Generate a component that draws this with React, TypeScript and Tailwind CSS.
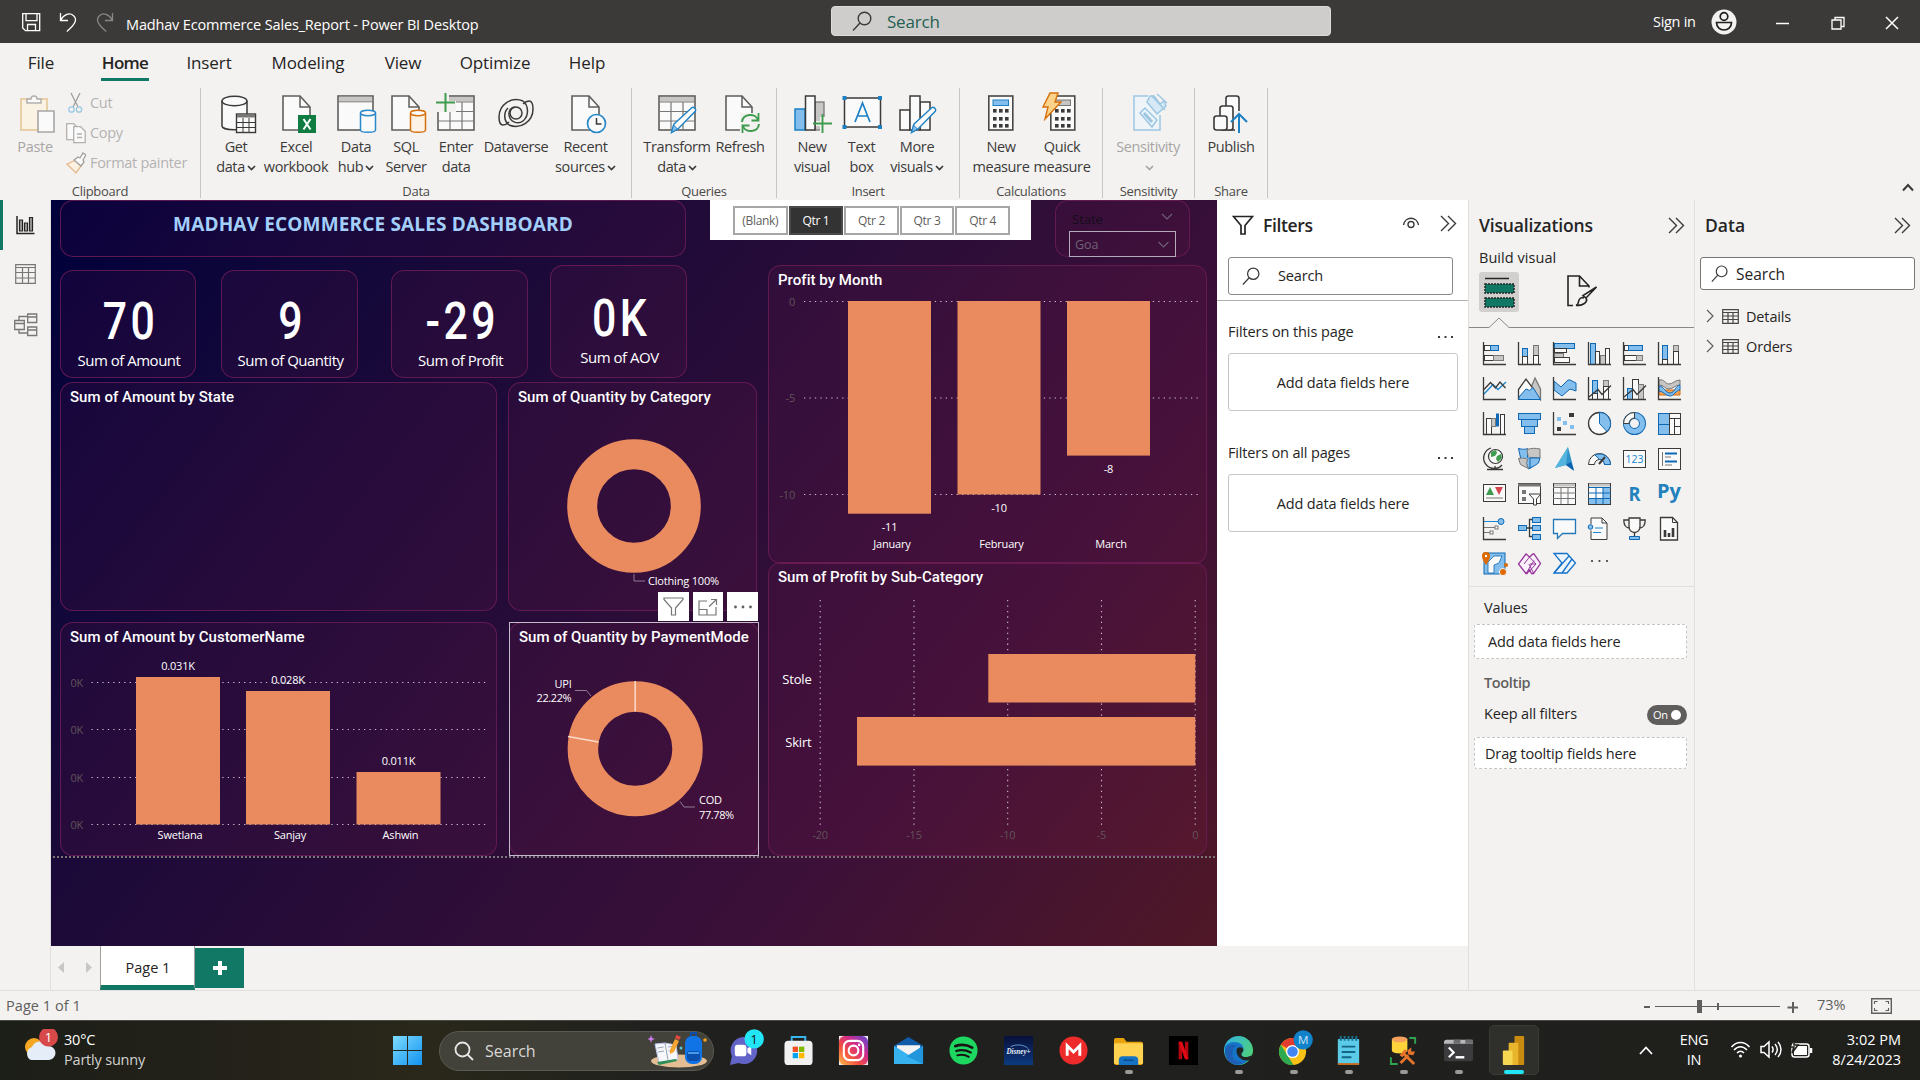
import React from "react";

type Kids = { children?: React.ReactNode };

const INK = "#3b3a39";
const BLUE = "#83beec";
const BSTR = "#0f68b4";
const GREY = "#c8c6c4";
const GSTR = "#797775";
const WHITE = "#fafafa";
const BAR = "#ea8b5f";

/* ---------- drawing helpers ---------- */

function B({ x, y, w, h, c = "w" }: { x: number; y: number; w: number; h: number; c?: "w" | "b" | "g" }) {
  const fill = c === "b" ? BLUE : c === "g" ? GREY : WHITE;
  const stroke = c === "b" ? BSTR : c === "g" ? GSTR : INK;
  return <rect x={x + 0.5} y={y + 0.5} width={w} height={h} fill={fill} stroke={stroke} />;
}

const Axes = () => <path d="M.5 0v22.5H23" fill="none" stroke={INK} strokeWidth="1.3" />;

function L({ d, c = INK, w = 1.3, f = "none" }: { d: string; c?: string; w?: number; f?: string }) {
  return <path d={d} fill={f} stroke={c} strokeWidth={w} />;
}

/* ---------- visual gallery ---------- */

const gallery: React.ReactNode[] = [
  <><B x={1} y={3} w={6} h={5} /><B x={7} y={3} w={8} h={5} c="b" /><B x={1} y={13} w={9} h={5} /><B x={10} y={13} w={10} h={5} c="g" /><Axes /></>,
  <><B x={4} y={6} w={5} h={8} c="b" /><B x={4} y={14} w={5} h={8} /><B x={15} y={3} w={5} h={10} c="g" /><B x={15} y={13} w={5} h={9} /><Axes /></>,
  <><B x={1} y={1} w={20} h={5} c="b" /><B x={1} y={6} w={12} h={4} /><B x={1} y={11} w={9} h={4} c="g" /><B x={1} y={15} w={15} h={5} /><Axes /></>,
  <><B x={2} y={1} w={5} h={21} c="b" /><B x={7} y={9} w={4} h={13} /><B x={12} y={13} w={5} h={9} c="g" /><B x={17} y={6} w={4} h={16} /><Axes /></>,
  <><B x={1} y={3} w={4} h={5} /><B x={5} y={3} w={14} h={5} c="b" /><B x={1} y={13} w={12} h={5} /><B x={13} y={13} w={6} h={5} c="g" /><Axes /></>,
  <><B x={4} y={3} w={5} h={14} c="b" /><B x={4} y={17} w={5} h={5} /><B x={15} y={3} w={5} h={6} c="g" /><B x={15} y={9} w={5} h={13} /><Axes /></>,
  <><L d="M1 17 10 7.500l5 5L23 5" c="#1a86d0" /><L d="M1 12.500 7.500 5.500l5 5.500L17 5l5.500 6" /><Axes /></>,
  <><L d="M12 13l5-12 5.500 11v11z" c={GSTR} f={GREY} /><L d="M.5 17.500v-5L8 2l7.500 10L.5 22z" f={WHITE} /><L d="M1 22.500h21.500L15 10.500l-3.500 3L8 12 1 20z" c={BSTR} f={BLUE} w={1} /></>,
  <><path d="M1 4l7 6 7-7h2l6 3v8l-6-2-8 7-8-6z" fill={BLUE} stroke={BSTR} /><Axes /></>,
  <><B x={4} y={3} w={5} h={14} c="b" /><B x={4} y={16} w={5} h={6} /><B x={15} y={3} w={5} h={6} c="g" /><B x={15} y={9} w={5} h={13} /><L d="M1 20l9-7.500 4 5L23 8.500" /><Axes /></>,
  <><B x={4} y={11} w={5} h={11} c="b" /><B x={9} y={2} w={6} h={20} /><B x={15} y={7} w={5} h={15} c="g" /><L d="M1 20l9-7.500 4 5L23 8.500" /><Axes /></>,
  <><path d="M1 3c6-1 6 4 10 4s6-4 11-4v5c-5 0-7 4-11 4S6 8 1 8z" fill={GREY} stroke={GSTR} /><path d="M1 13h21v5H1z" fill="#f2a45c" stroke="#d26b0b" /><path d="M1 9c5 0 6 7 11 7s6-8 10-8v5c-4 0-6 6-10 6S5 14 1 14z" fill={BLUE} stroke={BSTR} /><Axes /></>,
  <><B x={3} y={6} w={5} h={16} /><B x={8} y={6} w={4} h={8} c="g" /><path d="M13 1.500h3v13h-3z" fill="#0f68b4" /><B x={17} y={2} w={4} h={20} /><Axes /></>,
  <><B x={0} y={1} w={22} h={6} c="b" /><B x={3} y={7} w={16} h={7} c="b" /><B x={6} y={14} w={10} h={7} c="b" /></>,
  <><rect x="16" y="1" width="5" height="4" fill={INK} /><rect x="4" y="5" width="4" height="4" fill={BLUE} /><rect x="10" y="9" width="4" height="4" fill={BLUE} /><rect x="17" y="13" width="4" height="4" fill={BLUE} /><rect x="4" y="15" width="4" height="4" fill={INK} /><Axes /></>,
  <><circle cx="11.500" cy="11.500" r="11" fill={WHITE} stroke={INK} strokeWidth="1.300" /><path d="M11.500.5a11 11 0 0 1 7.500 19l-7.500-8z" fill={BLUE} stroke={BSTR} /></>,
  <><circle cx="11.500" cy="11.500" r="8" fill="none" stroke={BSTR} strokeWidth="7" /><circle cx="11.500" cy="11.500" r="8" fill="none" stroke={BLUE} strokeWidth="5.200" /><path d="M.5 11.500a11 11 0 0 1 11-11v5.500a5.500 5.500 0 0 0-5.500 5.500z" fill={WHITE} stroke={INK} /></>,
  <><B x={0} y={1} w={11} h={21} c="b" /><path d="M1 12.500h11" stroke={BSTR} /><B x={11} y={1} w={11} h={5} /><B x={11} y={6} w={5} h={16} /><B x={16} y={6} w={6} h={8} /><B x={16} y={14} w={6} h={8} /></>,
  <><circle cx="12.500" cy="9.500" r="7" fill={WHITE} stroke={INK} strokeWidth="1.200" /><path d="M8 5l5-2 1 3-2 3-4 1zM14 9l4-2 1 4-4 4-2-3z" fill="#3f9c4e" /><L d="M8 1a10.500 10.500 0 1 0 11 17M12 19v3M4 22.500h16" /></>,
  <><path d="M.5 1.500c5 1 6 1 9 0v9c3 1 4 1 4 10l-3 1.500-2-5-5-2z" fill={BLUE} stroke={BSTR} /><path d="M9 2.500c5-1.500 8-1.500 13-.5v9l-10-.5-2-2z" fill={GREY} stroke={GSTR} /><path d="M.5 11.500c4-1 8 0 9 1l-1 4 2 5-8-4z" fill={GREY} stroke={GSTR} /><path d="M12 11h10l-1.500 5-4.500 3-4 2z" fill={BLUE} stroke={BSTR} /></>,
  <><path d="M15 0l6 23-8-5-11 3z" fill="#2f93c9" /><path d="M15 0l-2 18-11 3z" fill="#55b4dd" /><path d="M13 18l8 6-3-9z" fill="#0b5fae" /></>,
  <><path d="M.5 17.500a11 11 0 0 1 22 0h-6a5 5 0 0 0-10 0z" fill={WHITE} stroke={INK} /><path d="M7 8a11 11 0 0 1 15.500 9.500h-6a5 5 0 0 0-5-5z" fill={BLUE} stroke={BSTR} /><L d="M11 17l6-7" w={2} /></>,
  <><B x={0} y={3} w={22} h={17} /><text x="11.500" y="15.500" textAnchor="middle" fontSize="10.500" fill="#1a86d0">123</text></>,
  <><B x={0} y={1} w={22} h={21} /><path d="M4.500 5v14" stroke={GSTR} /><path d="M7 6.500h12M7 14.500h12" stroke="#0f68b4" strokeWidth="2" /><path d="M7 10h6M7 18h7" stroke={GSTR} /></>,
  <><B x={0} y={2} w={22} h={17} /><path d="M3 13l4-8 4 8z" fill="#3f9c4e" /><path d="M12 5h8l-4 8z" fill="#d64550" /><path d="M3 16h17" stroke={GSTR} /></>,
  <><B x={0} y={1} w={22} h={20} /><path d="M0 3h23" stroke={GSTR} strokeWidth="3" /><rect x="4" y="8" width="4" height="4" fill={GSTR} /><rect x="4" y="15" width="4" height="4" fill={GSTR} /><path d="M11 12h12l-4.500 5v6h-3v-6z" fill={WHITE} stroke={INK} /></>,
  <><B x={0} y={1} w={22} h={21} /><path d="M1 3h21" stroke={GREY} strokeWidth="3" /><path d="M0 5.500h23M0 11h23M0 16.500h23M8 5v17M15 5v17" stroke={GSTR} /></>,
  <><B x={0} y={1} w={22} h={21} /><path d="M1 3h21" stroke={GREY} strokeWidth="3" /><path d="M15 5h7v17H1v-6h14z" fill={BLUE} /><path d="M0 5.500h23M0 11h23M0 16.500h23M8 5v17M15 5v17" stroke={BSTR} /></>,
  <><text x="11.500" y="18.500" textAnchor="middle" fontSize="20" fontWeight="700" fill="#2381bd" textLength="12" lengthAdjust="spacingAndGlyphs">R</text></>,
  <><text x="11" y="16" textAnchor="middle" fontSize="20" fontWeight="700" fill="#2381bd" textLength="24" lengthAdjust="spacingAndGlyphs">Py</text></>,
  <><path d="M1 4.500h16" stroke="#1a86d0" /><circle cx="18" cy="4.500" r="3" fill={BLUE} stroke={BSTR} /><path d="M1 10.500h11M1 15.500h6" stroke={GSTR} /><rect x="12" y="9" width="3" height="3" fill={WHITE} stroke={GSTR} /><rect x="7" y="14" width="3" height="3" fill={WHITE} stroke={GSTR} /><Axes /></>,
  <><B x={0} y={8} w={8} h={5} c="b" /><B x={14} y={0} w={8} h={5} c="b" /><B x={14} y={8} w={8} h={5} c="b" /><B x={14} y={17} w={8} h={5} c="b" /><L d="M9 11h5M14 2.500h-2.500v17H14" /></>,
  <><path d="M.5 2.500h22v14h-13l-5 5v-5h-4z" fill={WHITE} stroke="#2378b8" strokeWidth="1.300" /></>,
  <><path d="M3 7V1h11l5 5v16.500H3v-9" fill={WHITE} stroke={INK} /><path d="M14 1v5h5" fill="none" stroke={INK} /><circle cx="2.500" cy="10" r="2.300" fill={BLUE} stroke={BSTR} /><path d="M7 11h8M5 15.500h8" stroke="#1a86d0" /></>,
  <><path d="M6 1h11v9a5.500 5.500 0 0 1-11 0z" fill={WHITE} stroke={INK} strokeWidth="1.300" /><L d="M6 3H.8c0 5 2 8 6 8M17 3h5.200c0 5-2 8-6 8M11.500 16v3" /><path d="M6.500 19.500h10v3h-10z" fill={BLUE} stroke={BSTR} /></>,
  <><path d="M2.500.5h12l5 5v17.500h-17z" fill={WHITE} stroke={INK} strokeWidth="1.300" /><path d="M14.500.5v5h5" fill="none" stroke={INK} /><path d="M7 20v-7M11 20v-4M15 20v-9" stroke={INK} strokeWidth="2.600" /></>,
  <><rect x="1" y="1" width="21" height="21" fill={BLUE} stroke={BSTR} /><path d="M5 21V10l6-6h8l-3 7-5 2v8z" fill={WHITE} stroke={BSTR} strokeWidth=".8" /><path d="M-1 4a4 4 0 0 1 8 0c0 4-4 9-4 9s-4-5-4-9z" fill="#dc6a00" /><circle cx="3" cy="4" r="1.200" fill="#fff" /><circle cx="20" cy="20" r="3.600" fill="#dc6a00" stroke="#f3f2f1" /><circle cx="23" cy="13" r="2" fill="#dc6a00" /></>,
  <><path d="M8 2L11.500 5 15 2h1l6.500 9.500-7 10h-2L11.500 18 9 21.500H8L.5 12z" fill="#f8f0fa" stroke="#96329a" strokeWidth="1.300" /><path d="M11.500 5L18 12l-6.500 7M11.500 5L6 12M12 12l6 0M11 12l4.500 9M8 21.500l8-13" fill="none" stroke="#96329a" /></>,
  <><path d="M1 1.500h13l8.500 9.500-8.500 10H1L9 11z" fill="#eef6fd" stroke="#1473c9" strokeWidth="1.300" /><path d="M1 21L16 4M9 21L19 7" stroke="#1473c9" strokeWidth="1.300" /></>,
  <><circle cx="4" cy="9" r="1.100" fill={INK} /><circle cx="11.500" cy="9" r="1.100" fill={INK} /><circle cx="19" cy="9" r="1.100" fill={INK} /></>,
];

/* ---------- ribbon icons ---------- */

const Doc = ({ x = 5, w = 28 }: { x?: number; w?: number }) => (
  <>
    <path d={`M${x + 1} 3h${w - 11}l10 11v23h-${w - 1}z`} fill={WHITE} stroke="#605e5c" strokeWidth="1.600" />
    <path d={`M${x + w - 10} 3v11h10`} fill="none" stroke="#605e5c" strokeWidth="1.500" />
  </>
);

const Cyl = ({ c, f }: { c: string; f: string }) => (
  <>
    <path d="M24.500 20v17c0 3 15 3 15 0V20" fill={f} stroke={c} strokeWidth="1.500" />
    <ellipse cx="32" cy="20" rx="7.500" ry="2.700" fill={WHITE} stroke={c} strokeWidth="1.500" />
  </>
);

const Pencil = () => (
  <>
    <path d="M17 31L35 14.500c1.500-1 4.500 1.500 3.500 3.500L21 36l-6.500 3.500z" fill={WHITE} stroke="#1d80c3" strokeWidth="1.400" />
    <path d="M16.500 32l4 4-6 3.500z" fill={BLUE} stroke="#1d80c3" />
  </>
);

const Calc = ({ x = 5, grey = false }: { x?: number; grey?: boolean }) => (
  <g transform={`translate(${x} 0)`}>
    <rect x=".8" y="3" width="24" height="34" fill={WHITE} stroke="#4a4846" strokeWidth="1.600" />
    <rect x="5" y="7" width="15.500" height="5.500" fill={grey ? GREY : BLUE} stroke={grey ? GSTR : "#1d80c3"} />
    {[16, 24, 31].map((y) => [5, 11, 17].map((xx) => <rect key={`${xx}-${y}`} x={xx} y={y} width="3.600" height="3.600" fill={INK} />))}
  </g>
);

const Grid = () => (
  <>
    <rect x="2" y="3" width="36" height="34" fill={WHITE} stroke="#605e5c" strokeWidth="1.600" />
    <rect x="3" y="4" width="34" height="4.500" fill={GREY} />
    <path d="M2 9h36M2 18.500h36M2 28h36M14 9v28M26 9v28" stroke="#797775" strokeWidth="1.200" />
  </>
);

const ribbonIcons: Record<string, React.ReactNode> = {
  get: (
    <>
      <path d="M6 8v25c0 5 25 5 25 0V8" fill={WHITE} stroke={INK} strokeWidth="1.500" />
      <ellipse cx="18.500" cy="8" rx="12.500" ry="4.800" fill={WHITE} stroke={INK} strokeWidth="1.500" />
      <rect x="20.500" y="21" width="19" height="18.500" fill={WHITE} stroke={INK} strokeWidth="1.400" />
      <path d="M21 23h18" stroke={GSTR} strokeWidth="3" />
      <path d="M21 29.500h18M21 34.500h18M27 25v14M33 25v14" stroke={INK} />
    </>
  ),
  excel: (
    <>
      <Doc x={6} w={28} />
      <rect x="22" y="22" width="18" height="18" fill="#107c41" />
      <path d="M27.500 26l7 10.500M34.500 26l-7 10.500" stroke="#fff" strokeWidth="2" />
    </>
  ),
  hub: (
    <>
      <rect x="2" y="3" width="35" height="34" fill={WHITE} stroke="#605e5c" strokeWidth="1.600" />
      <path d="M3 6h33" stroke={GREY} strokeWidth="4.500" />
      <path d="M2 8.800h35" stroke="#797775" />
      <Cyl c="#2b88c8" f="#fafafa" />
    </>
  ),
  sql: (
    <>
      <Doc x={5} w={28} />
      <Cyl c="#d6700c" f="#fcf3e6" />
    </>
  ),
  enter: (
    <>
      <Grid />
      <path d="M-1 -1h14v20H-1zM13 8h7v11h-7z" fill="#f3f2f1" />
      <path d="M9.500 0v19M0 9.500h19" stroke="#3f9c4e" strokeWidth="2" />
    </>
  ),
  dataverse: (
    <g fill="none" stroke={INK} strokeWidth="1.500">
      <ellipse cx="20" cy="20" rx="6" ry="6" />
      <path d="M27 8C15 3 3 12 3 24c0 5 1 8 4 8 2 0 4-1 6-3" />
      <path d="M27 8c6 5 6 15 0 20-5 4-13 1-14-6-.5-4 2-8 6-8" />
      <path d="M13 32c12 5 24-4 24-16 0-5-1-8-4-8-2 0-4 1-6 3" />
      <path d="M13 32c-5-4-6-12-1-17" />
    </g>
  ),
  recent: (
    <>
      <Doc x={5} w={28} />
      <circle cx="30.500" cy="30.500" r="9" fill={WHITE} stroke="#2b88c8" strokeWidth="1.700" />
      <path d="M30.500 25v6h5" fill="none" stroke={INK} strokeWidth="1.500" />
    </>
  ),
  transform: (
    <>
      <Grid />
      <Pencil />
    </>
  ),
  refresh: (
    <>
      <Doc x={5} w={27} />
      <path d="M20 20h20v20H20z" fill="#f3f2f1" />
      <path d="M22 29c1-9 14-9 16-2M39 31c-1 9-14 9-16 2" fill="none" stroke="#3f9c4e" strokeWidth="2" />
      <path d="M38.500 20v7.500h-7M22.500 40v-7.500h7" fill="none" stroke="#3f9c4e" strokeWidth="1.800" />
    </>
  ),
  newvisual: (
    <>
      <rect x="3" y="16" width="10" height="21" fill={BLUE} stroke="#1d80c3" strokeWidth="1.500" />
      <rect x="23" y="9" width="9" height="28" fill={GREY} stroke={GSTR} strokeWidth="1.300" />
      <rect x="13.500" y="3" width="9.500" height="34" fill={WHITE} stroke={INK} strokeWidth="1.500" />
      <path d="M24 30.500h16M30.500 24v16" stroke="#f3f2f1" strokeWidth="5" />
      <path d="M21 30.500h19M30.500 21v19" stroke="#3f9c4e" strokeWidth="1.900" />
    </>
  ),
  textbox: (
    <>
      <rect x="2.500" y="5" width="36" height="29" fill={WHITE} stroke={INK} strokeWidth="1.500" />
      {[[0.5, 3], [36, 3], [0.5, 32], [36, 32]].map(([x, y]) => <rect key={`${x}${y}`} x={x} y={y} width="4" height="4" fill="#1d80c3" />)}
      <path d="M13 29L20.500 10 28 29M15.500 23h10" fill="none" stroke="#1d80c3" strokeWidth="1.700" />
    </>
  ),
  more: (
    <>
      <rect x="3" y="17" width="10" height="20" fill={WHITE} stroke={INK} strokeWidth="1.500" />
      <rect x="23" y="9" width="10" height="28" fill={WHITE} stroke={INK} strokeWidth="1.500" />
      <rect x="13" y="3" width="10" height="34" fill={WHITE} stroke={INK} strokeWidth="1.500" />
      <Pencil />
    </>
  ),
  calc: <Calc x={7} />,
  quick: (
    <>
      <Calc x={8} grey />
      <path d="M8 0h8l-3 9h6L3 26l3-12H1z" fill="#fbd38a" stroke="#d6700c" strokeWidth="1.400" />
    </>
  ),
  sensitivity: (
    <g stroke="#9cc7e2" strokeWidth="1.500">
      <path d="M20 3H6v34h26V22" fill="#eef4f8" />
      <path d="M12 20l5-5 12 12-5 7z" fill="#e9f3fa" />
      <path d="M16 20l8 9" strokeWidth="3" />
      <path d="M19 9l10 12 9-8-2-5-4 3-6-8-4 0z" fill="#d6e9f5" />
      <path d="M24 3l13 14M29 1l10 9" />
    </g>
  ),
  publish: (
    <g fill={WHITE} stroke={INK} strokeWidth="1.600">
      <rect x="15" y="3" width="13" height="34" rx="2.500" />
      <rect x="9" y="13" width="13" height="24" rx="2.500" />
      <rect x="3" y="23" width="13" height="14" rx="2.500" />
      <path d="M24 18h16v22H24z" fill="#f3f2f1" stroke="none" />
      <path d="M28 40V22M20 29l8-8 8 8" fill="none" stroke="#1d80c3" strokeWidth="2" />
    </g>
  ),
};

const Chevron = ({ c = INK }: { c?: string }) => (
  <svg width="9" height="6" viewBox="0 0 9 6" className="ml-0.5 inline-block"><path d="M1 1l3.500 3.500L8 1" fill="none" stroke={c} strokeWidth="1.700" /></svg>
);

function RibbonButton({ icon, a, b, w, caret, dim }: { icon: string; a: string; b?: string; w: string; caret?: boolean; dim?: boolean }) {
  return (
    <div className={`${w} flex shrink-0 flex-col items-center text-[14.5px] tracking-[-0.38px] ${dim ? "text-[#a8a6a4]" : "text-[#3b3a39]"}`}>
      <svg width="40" height="40" viewBox="0 0 40 40" className="shrink-0 overflow-visible">{ribbonIcons[icon]}</svg>
      <div className="mt-1 h-5 leading-5 whitespace-nowrap">{a}</div>
      <div className="h-5 leading-5 whitespace-nowrap">{b}{caret && <Chevron c={dim ? "#a8a6a4" : INK} />}</div>
    </div>
  );
}

function Group({ label, w, pad, children }: Kids & { label: string; w: string; pad: string }) {
  return (
    <div className={`${w} flex h-[110px] shrink-0 flex-col justify-between border-r border-[#c8c6c4]`}>
      <div className={`flex ${pad} pt-[5px]`}>{children}</div>
      <div className="h-[15px] text-center text-[13px] leading-[16px] tracking-[-0.3px] text-[#4c4a48]">{label}</div>
    </div>
  );
}

/* ---------- title bar, tabs, ribbon ---------- */

const Magnifier = ({ s = 20, c = INK }: { s?: number; c?: string }) => (
  <svg width={s} height={s} viewBox="0 0 20 20" fill="none" stroke={c} strokeWidth="1.400"><circle cx="12.500" cy="7.500" r="6.300" /><path d="M8 12L1 19.500" /></svg>
);

function TitleBar() {
  return (
    <header className="flex h-[43px] items-center bg-[#3b3a38] text-white">
      <svg width="100" height="24" viewBox="0 0 100 24" className="ml-[20px] shrink-0" fill="none" stroke="#fff" strokeWidth="1.300">
        <path d="M2.700 3.700h17v17H5.500l-2.800-2.800zM6 3.700v7h11v-7M7.500 20.500v-6h8v6" />
        <path d="M40.500 3v7.500H48M40.800 10c3-6 9-7.500 12.500-4.500 4 3.500 3 8-6.500 16" />
        <path d="M92.500 3v7.500H85M92.200 10c-3-6-9-7.500-12.500-4.500-4 3.500-3 8 6.500 16" stroke="#8a8886" />
      </svg>
      <div className="ml-[6px] w-[705px] shrink-0 pt-1.5 text-[14.5px] tracking-[-0.16px]">Madhav Ecommerce Sales_Report - Power BI Desktop</div>
      <div className="-mt-px flex h-[30px] w-[500px] shrink-0 items-center rounded-sm border border-[#dddbd9] bg-[#cfcdcb] pl-5 text-[17px] tracking-[-0.2px] text-[#245f53]">
        <Magnifier s={20} /><span className="ml-[15px] pt-0.5">Search</span>
      </div>
      <div className="ml-[322px] w-[46px] shrink-0 text-[14.5px] tracking-[-0.3px] whitespace-nowrap">Sign in</div>
      <svg width="26" height="26" viewBox="0 0 26 26" className="ml-[12px] shrink-0"><circle cx="13" cy="13" r="12.500" fill="#f3f2f1" /><g fill="none" stroke="#201f1e" strokeWidth="1.700"><circle cx="13" cy="7.500" r="3.800" /><path d="M5.500 13.500h15c0 10-15 10-15 0z" /></g></svg>
      <svg width="130" height="16" viewBox="0 0 130 16" className="mt-0.5 ml-[37px] shrink-0" fill="none" stroke="#fff" strokeWidth="1.500"><path d="M2 8.500h13" /><path d="M58 5h9v9h-9zM61 5V2.500h9v9h-3" strokeWidth="1.300" /><path d="M112 2l12 12M124 2l-12 12" /></svg>
    </header>
  );
}

function Tabs() {
  const tabs: [string, string][] = [["File", "w-[60px] ml-[11px]"], ["Home", "w-[48px] ml-[30px]"], ["Insert", "w-[60px] ml-[30px]"], ["Modeling", "w-[80px] ml-[29px]"], ["View", "w-[60px] ml-[25px]"], ["Optimize", "w-[80px] ml-[22px]"], ["Help", "w-[60px] ml-[22px]"]];
  return (
    <nav className="flex h-[45px] items-start pt-[3px] text-[17px] tracking-[-0.1px] text-[#252423]">
      {tabs.map(([t, c]) => (
        <div key={t} className={`${c} flex h-[35px] shrink-0 items-center justify-center ${t === "Home" ? "border-b-[3px] border-[#117865] pt-px font-semibold tracking-[-0.7px]" : "pb-[2px]"}`}>{t}</div>
      ))}
    </nav>
  );
}

function Ribbon() {
  return (
    <section className="flex h-[112px]">
      <Group label="Clipboard" w="w-[201px]" pad="pl-[11px]">
        <div className="flex w-[48px] flex-col items-center text-[14.5px] tracking-[-0.3px] text-[#a8a6a4]">
          <svg width="40" height="40" viewBox="0 0 40 40">
            <path d="M6 6h26v31H6z" fill="#faf3e4" stroke="#e9cfa6" strokeWidth="2" />
            <path d="M12 10V6h4c0-4 6-4 6 0h4v4z" fill={WHITE} stroke="#b3b0ad" strokeWidth="1.500" />
            <path d="M23 18h16v21H23z" fill={WHITE} stroke="#a8a6a4" strokeWidth="1.600" />
          </svg>
          <div className="mt-1 leading-5">Paste</div>
        </div>
        <div className="ml-[7px] flex flex-col text-[14.5px] tracking-[-0.3px] text-[#b5b3b1]">
          <div className="-mt-[5px] flex h-[30px] items-center">
            <svg width="20" height="22" viewBox="0 0 20 22" fill="none" strokeWidth="1.300"><path d="M5 1l7 14M14 1L7 15" stroke="#a19f9d" /><circle cx="5.500" cy="17.500" r="2.700" stroke="#9cc7e2" /><circle cx="13" cy="17.500" r="2.700" stroke="#9cc7e2" /></svg>
            <span className="ml-1">Cut</span>
          </div>
          <div className="flex h-[30px] items-center">
            <svg width="20" height="22" viewBox="0 0 20 22" fill={WHITE} stroke="#b3b0ad" strokeWidth="1.300"><path d="M.7 1.700h7l3 3v13H.7z" /><path d="M7.700 4.700h7l4.500 4.500v11.500H7.700z" /><path d="M11 12h5M11 15.500h5" /></svg>
            <span className="ml-1">Copy</span>
          </div>
          <div className="flex h-[30px] items-center">
            <svg width="20" height="22" viewBox="0 0 20 22" fill="none" strokeWidth="1.300"><path d="M1 12l9-4 5 6-5 7z" stroke="#e6b98a" fill="#fbf0e2" /><path d="M8 8l4-3 2 1 3-5 3 2-3 5 1 2-3 4z" stroke="#a19f9d" fill={WHITE} /></svg>
            <span className="ml-1">Format painter</span>
          </div>
        </div>
      </Group>
      <Group label="Data" w="w-[431px]" pad="pl-[3px]">
        <RibbonButton icon="get" a="Get" b="data" w="w-[64px]" caret />
        <RibbonButton icon="excel" a="Excel" b="workbook" w="w-[56px]" />
        <RibbonButton icon="hub" a="Data" b="hub" w="w-[64px]" caret />
        <RibbonButton icon="sql" a="SQL" b="Server" w="w-[36px]" />
        <RibbonButton icon="enter" a="Enter" b="data" w="w-[64px]" />
        <RibbonButton icon="dataverse" a="Dataverse" w="w-[56px]" />
        <RibbonButton icon="recent" a="Recent" b="sources" w="w-[83px]" caret />
      </Group>
      <Group label="Queries" w="w-[145px]" pad="pl-[9px]">
        <RibbonButton icon="transform" a="Transform" b="data" w="w-[72px]" caret />
        <RibbonButton icon="refresh" a="Refresh" w="w-[54px]" />
      </Group>
      <Group label="Insert" w="w-[183px]" pad="pl-[8px]">
        <RibbonButton icon="newvisual" a="New" b="visual" w="w-[54px]" />
        <RibbonButton icon="textbox" a="Text" b="box" w="w-[45px]" />
        <RibbonButton icon="more" a="More" b="visuals" w="w-[66px]" caret />
      </Group>
      <Group label="Calculations" w="w-[143px]" pad="pl-[11px]">
        <RibbonButton icon="calc" a="New" b="measure" w="w-[60px]" />
        <RibbonButton icon="quick" a="Quick" b="measure" w="w-[62px]" />
      </Group>
      <Group label="Sensitivity" w="w-[92px]" pad="pl-[2px]">
        <RibbonButton icon="sensitivity" a="Sensitivity" w="w-[86px]" caret dim />
      </Group>
      <Group label="Share" w="w-[73px]" pad="pl-0">
        <RibbonButton icon="publish" a="Publish" w="w-[72px]" />
      </Group>
      <div className="flex flex-1 items-end justify-end pr-1.5 pb-[7px]">
        <svg width="12" height="9" viewBox="0 0 12 9" className="-translate-y-px"><path d="M1 7.500l5-5.500 5 5.500" fill="none" stroke={INK} strokeWidth="2" /></svg>
      </div>
    </section>
  );
}

/* ---------- left rail ---------- */

function Rail() {
  return (
    <aside className="flex w-[51px] shrink-0 flex-col border-r border-[#e1dfdd]">
      <div className="flex h-[50px] items-center border-l-[3px] border-[#117865] pl-[13px]">
        <svg width="19" height="19" viewBox="0 0 19 19" fill="#a19f9d" stroke="#252423" strokeWidth="1.200"><path d="M1 0v17.500h17.500" fill="none" strokeWidth="1.500" /><path d="M3.500 4h3v11h-3zM8.500 7h3v8h-3zM13.500 1.500h3V15h-3z" /></svg>
      </div>
      <div className="flex h-[48px] items-center pl-[15px]">
        <svg width="21" height="20" viewBox="0 0 21 20" fill="none" stroke="#797775" strokeWidth="1.200"><path d="M.7.7h19.600v18.600H.7zM.7 3.500h19.600M.7 8.500h19.600M.7 14h19.600M7.500 3.500v16M13.500 3.500v16" /></svg>
      </div>
      <div className="flex h-[53px] items-center pl-[14px]">
        <svg width="24" height="24" viewBox="0 0 24 24" fill="#f3f2f1" stroke="#797775" strokeWidth="1.300"><path d="M5 7V3.500h8M5 16v4h8" fill="none" /><path d="M.7 7.500h9.600v9H.7zM13.700 1h9v8.500h-9zM13.700 14h9v8.500h-9zM.7 10.500h9.600M13.700 4h9M13.700 17h9" /></svg>
      </div>
    </aside>
  );
}

/* ---------- report visuals ---------- */

function Panel({ cls, title, vb, children }: Kids & { cls: string; title: string; vb?: string }) {
  return (
    <section className={`${cls} grid shrink-0 rounded-[13px] border border-[#6b1c55]/85 bg-[#d82a6a]/[0.07]`}>
      <h2 className="z-10 pt-[5px] pl-[9px] font-['Roboto'] text-[15px] leading-[18px] font-medium tracking-[0.04px] text-white [grid-area:1/1]">{title}</h2>
      {vb && <svg viewBox={vb} className="-m-px h-[calc(100%+2px)] w-[calc(100%+2px)] [grid-area:1/1]" fontSize="11" letterSpacing="-0.2">{children}</svg>}
    </section>
  );
}

function Kpi({ cls, value, label, pt = "pt-[24px]" }: { cls: string; value: string; label: string; pt?: string }) {
  return (
    <section className={`${cls} ${pt} flex shrink-0 flex-col items-center rounded-[13px] border border-[#6b1c55]/85 bg-[#d82a6a]/[0.07] text-white`}>
      <div className="scale-x-[0.84] pl-[6px] font-['Roboto'] text-[51px] leading-[54px] font-medium tracking-[4px] whitespace-nowrap">{value}</div>
      <div className="pl-[2px] text-[15px] leading-[22px] tracking-[-0.5px] whitespace-nowrap">{label}</div>
    </section>
  );
}

const Dots = ({ d }: { d: string }) => <path d={d} fill="none" stroke="#cdbfd0" strokeWidth="1.100" strokeDasharray="1.300 4.150" />;

function Report() {
  const grey = "#605458";
  return (
    <main className="h-[746px] w-[1166px] shrink-0 overflow-hidden bg-[linear-gradient(128deg,#00003a_0%,#10073a_17%,#260c38_45%,#3c1038_74%,#501827_100%)]">
      <div className="flex h-[57px] pl-[9px]">
        <div className="flex w-[626px] shrink-0 justify-center rounded-[13px] border border-[#6b1c55]/85 bg-[#d82a6a]/[0.05] pt-[11px]">
          <h1 className="text-[19px] leading-6 font-bold tracking-[0.16px] whitespace-nowrap text-[#a3cffb]">MADHAV ECOMMERCE SALES DASHBOARD</h1>
        </div>
        <div className="ml-6 flex h-10 w-[321px] shrink-0 gap-px bg-white pt-[6px] pl-[23px]">
          {["(Blank)", "Qtr 1", "Qtr 2", "Qtr 3", "Qtr 4"].map((q, i) => (
            <div key={q} className={`flex h-[29px] w-[54.600px] items-center justify-center border-2 text-[12px] tracking-[-0.3px] ${i === 1 ? "border-[#4a4a4a] bg-[#333] text-white" : "border-[#a6a6a6] bg-white text-[#605e5c]"}`}>{q}</div>
          ))}
        </div>
        <div className="ml-6 w-[135px] shrink-0 rounded-[13px] border border-[#6b1c55]/85 bg-[#d82a6a]/[0.05] px-[13px] pt-[9px]">
          <div className="flex h-[21px] items-start justify-between pr-[3px] pl-[3px] text-[13px] leading-[18px] text-[#140d1a]">State
            <svg width="12" height="8" viewBox="0 0 12 8" className="mt-[3px]"><path d="M1 1l5 5 5-5" fill="none" stroke="#6b5f75" strokeWidth="1.200" /></svg>
          </div>
          <div className="flex h-[26px] items-center justify-between border border-[#b5a9bc] px-[5px] pt-0.5 text-[12.5px] text-[#6f6275]">Goa
            <svg width="13" height="8" viewBox="0 0 12 8"><path d="M1 1l5 5 5-5" fill="none" stroke="#6b5f75" strokeWidth="1.200" /></svg>
          </div>
        </div>
      </div>

      <div className="mt-2 flex pl-[9px]">
        <div className="w-[708px] shrink-0">
          <div className="flex h-[113px] items-end">
            <Kpi cls="h-[108px] w-[136px]" value="70" label="Sum of Amount" />
            <Kpi cls="ml-[25px] h-[108px] w-[137px]" value="9" label="Sum of Quantity" />
            <Kpi cls="ml-[33px] h-[108px] w-[137px]" value="-29" label="Sum of Profit" />
            <Kpi cls="ml-[22px] h-[113px] w-[137px]" value="0K" label="Sum of AOV" pt="pt-[26px]" />
          </div>
          <div className="mt-1 flex h-[229px]">
            <Panel cls="w-[437px]" title="Sum of Amount by State" />
            <Panel cls="ml-[11px] w-[249px]" title="Sum of Quantity by Category" vb="508 382 249 229">
              <circle cx="634" cy="506" r="51.800" fill="none" stroke={BAR} strokeWidth="30" />
              <path d="M634 574v7h11" fill="none" stroke="#8f7a92" />
              <text x="648" y="585" fill="#fff" textLength="71">Clothing 100%</text>
            </Panel>
          </div>
          <div className="mt-[11px] flex h-[234px]">
            <Panel cls="w-[437px]" title="Sum of Amount by CustomerName" vb="60 622 437 234">
              {[682.5, 729.5, 777.5, 824.5].map((y) => <g key={y}><Dots d={`M91.500 ${y}H488`} /><text x="83" y={y + 4} textAnchor="end" fill={grey}>0K</text></g>)}
              {([[136, 677, "0.031K", "Swetlana"], [246, 691, "0.028K", "Sanjay"], [356.5, 772, "0.011K", "Ashwin"]] as [number, number, string, string][]).map(([x, y, v, n]) => (
                <g key={n} fill="#fff" textAnchor="middle">
                  <rect x={x} y={y} width="84" height={824.5 - y} fill={BAR} />
                  <text x={x + 42} y={y - 7}>{v}</text>
                  <text x={x + 44} y="839">{n}</text>
                </g>
              ))}
            </Panel>
            <div className="relative ml-[12px] h-[234px] w-[250px] outline outline-1 -outline-offset-1 outline-[#c4b9c8]">
              <Panel cls="h-[234px] w-[250px]" title="Sum of Quantity by PaymentMode" vb="509 622 250 234">
                <circle cx="635.200" cy="748.700" r="52.300" fill="none" stroke={BAR} strokeWidth="30.500" />
                <path d="M635.200 681v30.500M568 736.500l30.500 5.500" stroke="#f9dccb" strokeWidth="1.500" />
                <path d="M575 690.500h11.500l4.500 5.500M680 801.500l4 5.500h11" fill="none" stroke="#8f7a92" />
                <g fill="#fff"><text x="571.500" y="688" textAnchor="end">UPI</text><text x="571.500" y="702" textAnchor="end" textLength="35">22.22%</text><text x="699" y="804">COD</text><text x="699" y="819" textLength="35">77.78%</text></g>
              </Panel>
              <div className="absolute -top-[30px] right-px flex gap-1">
                <div className="flex h-[29px] w-[31px] items-center justify-center bg-white"><svg width="21" height="19" viewBox="0 0 21 19" fill="none" stroke="#797775" strokeWidth="1.200"><path d="M1 1h19v1.500L12.500 11v7h-4v-7L1 2.500z" /></svg></div>
                <div className="flex h-[29px] w-[30px] items-center justify-center bg-white"><svg width="20" height="18" viewBox="0 0 20 18" fill="none" stroke="#797775" strokeWidth="1.200"><path d="M9 3H1v14h17V9M1 11.500h8V17M11 8.500L18 2M13 1.500h5.500V7" /></svg></div>
                <div className="flex h-[29px] w-[31px] items-center justify-center bg-white"><svg width="20" height="4" viewBox="0 0 20 4" fill="#605e5c"><circle cx="2.500" cy="2" r="1.400" /><circle cx="10" cy="2" r="1.400" /><circle cx="17.500" cy="2" r="1.400" /></svg></div>
              </div>
            </div>
          </div>
        </div>
        <div className="shrink-0">
          <Panel cls="h-[299px] w-[439px]" title="Profit by Month" vb="768 265 439 299">
            {([[301.5, "0"], [398, "-5"], [494.5, "-10"]] as [number, string][]).map(([y, t]) => <g key={t}><Dots d={`M804 ${y}H1198.500`} /><text x="795" y={y + 4} textAnchor="end" fill={grey}>{t}</text></g>)}
            {([[848, 513.7, "-11", "January"], [957.5, 494.5, "-10", "February"], [1067, 455.6, "-8", "March"]] as [number, number, string, string][]).map(([x, y, v, n]) => (
              <g key={n} fill="#fff" textAnchor="middle">
                <rect x={x} y="301" width="83" height={y - 301} fill={BAR} />
                <text x={x + 41.5} y={y + 17.5}>{v}</text>
                <text x={x + 44} y="548">{n}</text>
              </g>
            ))}
          </Panel>
          <Panel cls="-mt-0.5 h-[294px] w-[439px]" title="Sum of Profit by Sub-Category" vb="768 562 439 294">
            {([[820.2, "-20"], [914, "-15"], [1007.7, "-10"], [1101.5, "-5"], [1195.2, "0"]] as [number, string][]).map(([x, t]) => <g key={t}><Dots d={`M${x} 600V826`} /><text x={x} y="839" textAnchor="middle" fill={grey}>{t}</text></g>)}
            <rect x="988.300" y="654" width="207" height="48.500" fill={BAR} />
            <rect x="857" y="717" width="338.300" height="48.600" fill={BAR} />
            <g fill="#fff" fontSize="13"><text x="811.500" y="684" textAnchor="end">Stole</text><text x="811.500" y="747" textAnchor="end">Skirt</text></g>
          </Panel>
        </div>
      </div>
      <div className="ml-0.5 h-0.5 bg-[repeating-linear-gradient(90deg,#7a7678_0_2px,transparent_2px_4px)]" />
    </main>
  );
}

/* ---------- right panes ---------- */

const Double = () => (
  <svg width="17" height="17" viewBox="0 0 17 17" fill="none" stroke={INK} strokeWidth="1.400"><path d="M1 1l7.500 7.500L1 16M8 1l7.500 7.500L8 16" /></svg>
);

const headCls = "text-[17.5px] font-semibold tracking-[-0.35px] text-[#252423]";
const bodyCls = "text-[14.5px] tracking-[-0.15px] text-[#252423]";

function Filters() {
  return (
    <aside className="h-[746px] w-[251px] shrink-0 bg-white">
      <div className="flex h-[50px] items-center pl-[15px]">
        <svg width="22" height="20" viewBox="0 0 22 20" fill="none" stroke="#252423" strokeWidth="1.700"><path d="M1.500 1.500h19L13 10.500V19H9v-8.500z" /></svg>
        <span className={`${headCls} ml-[9px] w-[139px]`}>Filters</span>
        <svg width="18" height="14" viewBox="0 0 18 14" className="-mt-1" fill="none" stroke={INK} strokeWidth="1.400"><path d="M1.500 9C3 0 15 0 16.500 9" /><circle cx="9" cy="8.500" r="3" /></svg>
        <span className="-mt-1 ml-[20px]"><Double /></span>
      </div>
      <div className="h-[51px] border-b border-[#b3b0ad] pt-[7px] pl-[11px]">
        <div className={`${bodyCls} flex h-[38px] w-[225px] items-center rounded-[3px] border border-[#8a8886] pl-[13px]`}><Magnifier s={18} /><span className="ml-[18px]">Search</span></div>
      </div>
      {["Filters on this page", "Filters on all pages"].map((t, i) => (
        <div key={t} className={`${i ? "h-[122px] pt-px" : "h-[121px]"} pl-[11px]`}>
          <div className={`${bodyCls} flex ${i ? "h-[51px]" : "h-[52px]"} items-end justify-between pr-[15px] pb-2.5`}><span className={i ? "" : "tracking-[-0.1px]"}>{t}</span>
            <svg width="15" height="3" viewBox="0 0 15 3" className="mb-[4px]" fill={INK}><rect width="2" height="2" /><rect x="6.500" width="2" height="2" /><rect x="13" width="2" height="2" /></svg>
          </div>
          <div className={`${bodyCls} flex h-[58px] w-[230px] items-center justify-center rounded-[3px] border border-[#c8c6c4] pt-px`}>Add data fields here</div>
        </div>
      ))}
    </aside>
  );
}

function Visualizations() {
  return (
    <aside className="flex w-[227px] shrink-0 flex-col border-x border-[#e1dfdd]">
      <div className="flex h-[50px] items-center justify-between pr-[9px] pl-[10px]"><span className="text-[17.5px] font-semibold tracking-[-0.15px] text-[#252423]">Visualizations</span><Double /></div>
      <div className="h-[22px] pl-[10px] text-[14.5px] leading-[16px] tracking-[0.05px] text-[#252423]">Build visual</div>
      <div className="flex h-10 items-center pl-[10px]">
        <div className="flex h-10 w-10 items-center justify-center rounded-[3px] bg-[#d2d0ce]">
          <svg width="31" height="32" viewBox="0 0 31 32"><path d="M1 2.500h24" stroke="#252423" strokeWidth="1.500" /><g fill="#117865" stroke="#252423" strokeWidth="1.500" strokeDasharray="2 1"><path d="M1 8h29v9H1zM1 22h29v9H1z" /></g></svg>
        </div>
        <svg width="32" height="32" viewBox="0 0 32 32" className="-mt-0.5 ml-[47px]" fill="none" stroke="#252423" strokeWidth="1.600"><path d="M23 12.500V11L13.500 1H2v29.500h5M13.500 1v10h9" /><path d="M30.500 12L20 23l-3-2.500zM20 23c2 3-1 7.500-10 7.500 3-1 2-3 3-5.500 1-2 3-3 5-2" /></svg>
      </div>
      <svg width="225" height="16" viewBox="0 0 225 16" className="shrink-0" fill="none" stroke="#8a8886"><path d="M0 15.500h20L30 6l10 9.500h185" /></svg>
      <div className="grid h-[258px] grid-cols-[repeat(6,35px)] grid-rows-[repeat(7,35px)] pt-[14px] pl-[14px]">
        {gallery.map((g, i) => <svg key={i} width="23" height="23" viewBox="0 0 23 23" className="overflow-visible">{g}</svg>)}
      </div>
      <div className="border-t border-[#e1dfdd] pt-[11px] pr-[7px] pl-[5px]">
        <div className={`${bodyCls} h-[26px] pl-[10px] leading-[20px]`}>Values</div>
        <div className={`${bodyCls} flex h-[35px] items-center rounded-[3px] border border-dashed border-[#c8c6c4] bg-white pl-[13px]`}>Add data fields here</div>
        <div className="mt-[13px] h-[22px] pl-[10px] text-[14.5px] leading-[22px] font-semibold tracking-[-0.35px] text-[#605e5c]">Tooltip</div>
        <div className="mt-[10px] flex h-[22px] items-center justify-between pl-[10px]">
          <span className={`${bodyCls} -mt-0.5`}>Keep all filters</span>
          <div className="flex h-5 w-10 items-center justify-between rounded-full bg-[#605e5c] pr-[6px] pl-[6px] text-[11px] tracking-tight text-white">On<span className="h-[10px] w-[10px] rounded-full bg-white" /></div>
        </div>
        <div className={`${bodyCls} mt-[11px] flex h-8 items-center rounded-[3px] border border-dashed border-[#c8c6c4] bg-white pt-0.5 pl-[10px]`}>Drag tooltip fields here</div>
      </div>
    </aside>
  );
}

function DataPane() {
  return (
    <aside className="flex-1">
      <div className="flex h-[50px] items-center justify-between pr-[9px] pl-[10px]"><span className="text-[17.5px] font-semibold tracking-[0px] text-[#252423]">Data</span><Double /></div>
      <div className="mt-[7px] ml-[5px] flex h-[33px] w-[215px] items-center rounded-[3px] border border-[#797775] bg-white pl-[10px] text-[#252423]"><Magnifier s={17} /><span className="ml-[8px] pt-[3px] text-[15.5px]">Search</span></div>
      <div className="mt-[11px]">
        {["Details", "Orders"].map((t) => (
          <div key={t} className={`${bodyCls} flex h-[30px] items-center pl-[11px]`}>
            <svg width="8" height="14" viewBox="0 0 8 14" fill="none" stroke="#605e5c" strokeWidth="1.200"><path d="M1 1l6 6-6 6" /></svg>
            <svg width="17" height="15" viewBox="0 0 17 15" className="mr-[7px] ml-[8px]" fill="none" stroke="#484644" strokeWidth="1.200"><path d="M.7.7h15.600v13.600H.7zM.7 3.500h15.600M.7 7h15.600M.7 10.500h15.600M6 3v11M11 3v11" /></svg>
            <span className="pt-px">{t}</span>
          </div>
        ))}
      </div>
    </aside>
  );
}

/* ---------- page tabs and status bar ---------- */

function PageTabs() {
  return (
    <div className="flex h-11 w-[1417px] items-start">
      <svg width="49" height="44" viewBox="0 0 49 44" fill="#c8c6c4"><path d="M13 16v11l-6-5.500zM35 16v11l6-5.500z" /></svg>
      <div className="flex h-11 w-[95px] items-center justify-center border-x border-b-[5px] border-x-[#a19f9d] border-b-[#117865] bg-white pt-[4px] pl-px text-[14.5px] text-[#252423]">Page 1</div>
      <div className="mt-0.5 flex h-10 w-[49px] items-center justify-center bg-[#117865]"><svg width="14" height="14" viewBox="0 0 14 14"><path d="M7 0v14M0 7h14" stroke="#fff" strokeWidth="4" /></svg></div>
    </div>
  );
}

function StatusBar() {
  return (
    <div className="flex h-[30px] items-center border-t border-[#e1dfdd] pl-[6px] text-[14.5px] text-[#605e5c]">
      <span className="w-[1638px] tracking-[0.05px]">Page 1 of 1</span>
      <svg width="154" height="16" viewBox="0 0 154 16" fill="none" stroke="#605e5c"><path d="M0 9h6M149 4v11M143.500 9.500h10.500" strokeWidth="2" /><path d="M11 8.500h125" /><path d="M55.500 2v13" strokeWidth="5" /><path d="M74 5v7" strokeWidth="2" /></svg>
      <span className="-mt-0.5 ml-[19px] w-[54px] text-[14.5px] tracking-[-0.1px]">73%</span>
      <svg width="21" height="16" viewBox="0 0 21 16" fill="none" stroke="#605e5c" strokeWidth="1.400"><path d="M.7.7h19.600v14.600H.7z" /><path d="M3.500 6V3.500h3M14.500 3.500h3V6M17.500 10v2.500h-3M6.500 12.500h-3V10" strokeWidth="1.100" /></svg>
    </div>
  );
}

/* ---------- taskbar ---------- */

const apps: { n: string; run?: "dot" | "active"; g: React.ReactNode }[] = [
  { n: "chat", g: <><path d="M16 2a14 14 0 1 1-5 27l-9 2 2-9A14 14 0 0 1 16 2z" fill="#6264c7" /><rect x="7" y="10" width="12" height="12" rx="3" fill="#fff" /><path d="M20 14l4-3v10l-4-3z" fill="#fff" /><circle cx="27" cy="4" r="10" fill="#22e6f5" /><text x="27" y="9" fontSize="13" textAnchor="middle" fill="#111">1</text></> },
  { n: "store", g: <><path d="M9 8V2h14v6" fill="none" stroke="#38b6f1" strokeWidth="2" /><rect x="1.500" y="6" width="29" height="25" rx="4" fill="#f1f1f1" /><path d="M10 12h5.500v5.500H10z" fill="#f25022" /><path d="M16.500 12H22v5.500h-5.500z" fill="#7fba00" /><path d="M10 18.500h5.500V24H10z" fill="#00a4ef" /><path d="M16.500 18.500H22V24h-5.500z" fill="#ffb900" /></> },
  { n: "instagram", g: <><rect x="1" y="1" width="30" height="30" fill="#f6e9ee" /><rect x="1" y="1" width="30" height="30" rx="6" fill="url(#ig)" /><rect x="6" y="6" width="20" height="20" rx="6" fill="none" stroke="#fff" strokeWidth="2.200" /><circle cx="16" cy="16" r="5" fill="none" stroke="#fff" strokeWidth="2.200" /><circle cx="21.800" cy="10.200" r="1.300" fill="#fff" /></> },
  { n: "mail", g: <><path d="M1 11L16 2l15 9v19H1z" fill="#0f5ba8" /><path d="M4 10.500h24v8L16 23 4 17z" fill="#f3f3f3" /><path d="M1 11l30 19H1z" fill="#38b2ee" /><path d="M31 11L14 22l17 8z" fill="#2196dd" /></> },
  { n: "spotify", g: <><circle cx="16" cy="16" r="14.500" fill="#1ed760" /><g fill="none" stroke="#191414" strokeLinecap="round"><path d="M7.500 11.500c6-2 12-1.500 17.500 1.500" strokeWidth="2.800" /><path d="M8.500 16.500c5-1.500 10-1 15 1.500" strokeWidth="2.300" /><path d="M9.500 21c4-1 8-.8 12 1.500" strokeWidth="2" /></g></> },
  { n: "disney", g: <><rect x="1" y="1" width="30" height="30" fill="url(#dp)" /><path d="M8 12c6-3 14-2 18 2" fill="none" stroke="#7fb7ea" strokeWidth=".8" /><text x="16" y="19.500" fontSize="8.500" fontStyle="italic" fontWeight="700" fontFamily="Liberation Serif" textAnchor="middle" fill="#e6f1fc" textLength="25" lengthAdjust="spacingAndGlyphs">Disney+</text></> },
  { n: "mega", g: <><circle cx="16" cy="16" r="14.500" fill="#ee2b2b" /><path d="M9.500 21.500V11l6.500 6.500 6.500-6.500v10.500" fill="none" stroke="#fff" strokeWidth="3" /></> },
  { n: "folder", run: "dot", g: <><path d="M1 5c0-1 1-2 2-2h8l3 4h15c1 0 2 1 2 2v20c0 1-1 2-2 2H3c-1 0-2-1-2-2z" fill="#e8a30c" /><rect x="1" y="8.500" width="30" height="21.500" rx="1.500" fill="#ffd251" /><path d="M6 31v-5a4 4 0 0 1 4-4h12a4 4 0 0 1 4 4v5z" fill="#1673c4" /><path d="M11 26h10" stroke="#0b4a86" strokeWidth="1.500" /></> },
  { n: "netflix", g: <><rect x="1" y="1" width="30" height="30" fill="#000" /><path d="M11 7h3.500v18H11zM17.500 7H21v18h-3.500z" fill="#b20710" /><path d="M11 7h3.500L21 25h-3.500z" fill="#e50914" /></> },
  { n: "edge", run: "dot", g: <><circle cx="16" cy="16" r="15" fill="url(#ed)" /><path d="M2 12C8 4 22 7 21 15c0 3-2 3-2 5 0 3 6 4 11 1-3 6-9 10-15 10C6 30 1 22 2 12z" fill="#1573c8" /><path d="M10 17c-2 7 4 12 12 11-9 6-20 0-20-11 0-5 7-9 12-6-3 1-4 3-4 6z" fill="#1d5fb4" /><path d="M14 15c1-3 6-3 7 0 0 3-2 3-2 5 0 3 6 4 11 1l2-5v5l-4 5c-8 2-15-4-14-11z" fill="#22251f" /></> },
  { n: "chrome", run: "dot", g: <><circle cx="15" cy="17" r="14" fill="#fbc116" /><path d="M15 17L3 10a14 14 0 0 1 24 0z" fill="#e33b2e" /><path d="M15 3a14 14 0 0 1 12.500 7.500H15z" fill="#e33b2e" /><path d="M3 10l8 13 5 8A14 14 0 0 1 3 10z" fill="#2da94f" /><circle cx="15" cy="17" r="6.800" fill="#fff" /><circle cx="15" cy="17" r="5.400" fill="#4285f4" /><circle cx="26" cy="5" r="10" fill="#1181c9" /><text x="26" y="9.500" fontSize="12" textAnchor="middle" fill="#cde6f8">M</text></> },
  { n: "notepad", run: "dot", g: <><rect x="5" y="4" width="22" height="27" rx="1" fill="#5ccbe9" /><path d="M5 29h22v2H5z" fill="#c66a1c" /><path d="M8 1v5M12 1v5M16 1v5M20 1v5M24 1v5" stroke="#17708f" strokeWidth="2" /><path d="M9 12h14M9 17.500h14M9 23h10" stroke="#136683" strokeWidth="2" /></> },
  { n: "ssms", run: "dot", g: <><path d="M4 4v12c0 4 16 4 16 0V4z" fill="#ffd43a" /><ellipse cx="12" cy="4.500" rx="8" ry="3" fill="#f5a05c" /><path d="M22 3h6v6M3 23v7h7" fill="none" stroke="#2fa351" strokeWidth="2" /><path d="M13 29l8-8M16 19l11 11" stroke="#e8742c" strokeWidth="3" /><path d="M12 21l5-6 3 1-5 7zM21 20l-1-4 4-3v4h4l-2 4z" fill="#e8742c" /></> },
  { n: "terminal", run: "dot", g: <><rect x="1" y="5" width="30" height="22" rx="2" fill="#3c3c3e" /><path d="M1 8c0-2 1-3 3-3h25c1 0 2 1 2 3v1H1z" fill="#b8b8b8" /><path d="M11 5h7v4h-7zM23 5h8v4h-8z" fill="#6d6d6f" /><path d="M6 13l5 5-5 5" fill="none" stroke="#fff" strokeWidth="2.200" /><path d="M13 23h9" stroke="#fff" strokeWidth="2.500" /></> },
  { n: "powerbi", run: "active", g: <><rect x="17" y="1" width="10" height="30" rx="1" fill="#c98a10" /><rect x="11" y="8" width="10" height="23" rx="1" fill="#e9b52c" /><rect x="5" y="16" width="10" height="15" rx="1" fill="#f6d751" /></> },
];

function Taskbar() {
  return (
    <footer className="flex h-[60px] items-center border-t border-[#4a4a45] bg-[linear-gradient(90deg,#1c1e18_0%,#26231a_16%,#2a281a_22%,#20211f_34%,#1f201c_100%)] text-white">
      <svg width="36" height="36" viewBox="0 0 36 36" className="-mt-2 ml-[24px] shrink-0"><circle cx="10" cy="18" r="9" fill="#f5a623" /><path d="M7 31a7 7 0 0 1 1-13 9 9 0 0 1 16-1 7 7 0 0 1 1 14z" fill="#e4edf8" /><circle cx="24.500" cy="8" r="9.500" fill="#d84a4a" /><text x="24.500" y="13" fontSize="13" textAnchor="middle" fill="#fff">1</text></svg>
      <div className="-mt-px ml-1 w-[329px] shrink-0 text-[14.5px] leading-5 tracking-[-0.2px]"><div>30°C</div><div className="text-[#d2d2d0]">Partly sunny</div></div>
      <svg width="29" height="29" viewBox="0 0 29 29" className="shrink-0"><defs><linearGradient id="win" x2="1" y2="1"><stop stopColor="#7ddcff" /><stop offset="1" stopColor="#1292ef" /></linearGradient></defs><path d="M0 0h14v14H0zM15 0h14v14H15zM0 15h14v14H0zM15 15h14v14H15z" fill="url(#win)" /></svg>
      <div className="ml-[17px] flex h-10 w-[275px] shrink-0 items-center rounded-full border border-[#5a5a52] bg-[#42413a] pl-[14px]">
        <svg width="20" height="20" viewBox="0 0 20 20" className="shrink-0" fill="none" stroke="#e6e6e6" strokeWidth="1.800"><circle cx="8.500" cy="8.500" r="7" /><path d="M13.500 13.500L19 19" /></svg>
        <span className="ml-[11px] w-[163px] shrink-0 text-[16px] text-[#d8d8d6]">Search</span>
        <svg width="60" height="40" viewBox="0 0 60 38" className="shrink-0">
          <ellipse cx="31" cy="29" rx="28" ry="6.500" fill="#e5bd93" />
          <path d="M7 12l10-1 11 2 2 14-19 4z" fill="#f5f7fa" stroke="#b9c4e8" /><path d="M17 11l3 17M9.500 16l6-1M10 20l6-1M20 15l6-1M20.500 19l6-1" stroke="#9aa7b5" />
          <path d="M9 30l2 3 18-4-1-2z" fill="#2d8f57" /><path d="M22 18l5-11 4 2-5 11-4 2z" fill="#f6a530" /><path d="M27 6l1.500-3L33 5l-2 3z" fill="#e8483f" />
          <rect x="37" y="4" width="17" height="28" rx="7" fill="#1174e6" /><rect x="39" y="19" width="13" height="10" rx="3" fill="#0a4fae" /><path d="M43 4V1h5v3" fill="none" stroke="#0a4fae" strokeWidth="2" /><path d="M40 21h11" stroke="#61b3ff" strokeWidth="1.500" />
          <path d="M3 3l1 3 3 1-3 1-1 3-1-3-3-1 3-1z" fill="#d27cf2" /><circle cx="33" cy="16" r="1.500" fill="#52c7d6" /><circle cx="57" cy="8" r="1.800" fill="#f2a11f" />
        </svg>
      </div>
      <svg width="0" height="0" className="absolute"><defs>
        <linearGradient id="ig" x1="0" y1="1" x2="1" y2="0"><stop stopColor="#fdc04a" /><stop offset=".35" stopColor="#f4503f" /><stop offset=".65" stopColor="#cf2b8d" /><stop offset="1" stopColor="#5a4bd8" /></linearGradient>
        <linearGradient id="dp" x2="0" y2="1"><stop stopColor="#08103a" /><stop offset="1" stopColor="#0c3a80" /></linearGradient>
        <linearGradient id="ed" x2="1" y2=".6"><stop stopColor="#2fb0e8" /><stop offset="1" stopColor="#4fd07a" /></linearGradient>
      </defs></svg>
      <div className="ml-[2px] flex shrink-0">
        {apps.map((a) => (
          <div key={a.n} className="flex w-[55px] justify-center">
            <div className={`-mt-px flex h-[50px] w-[50px] flex-col items-center rounded-[5px] pt-[9px] ${a.run === "active" ? "border border-[#3a3b36] bg-[#2f302c]" : "border border-transparent"}`}>
              <svg width="31" height="31" viewBox="0 0 32 32" className="shrink-0 overflow-visible">{a.g}</svg>
              {a.run === "dot" && <div className="mt-[4px] h-1 w-2 rounded-full bg-[#9a9a98]" />}
              {a.run === "active" && <div className="mt-[4px] h-1 w-5 rounded-full bg-[#22e6f5]" />}
            </div>
          </div>
        ))}
      </div>
      <svg width="14" height="9" viewBox="0 0 14 9" className="ml-[98px] shrink-0" fill="none" stroke="#fff" strokeWidth="1.800"><path d="M1 8l6-6.500L13 8" /></svg>
      <div className="-mt-px ml-[21px] w-[40px] shrink-0 text-center text-[14.5px] leading-5 tracking-[-0.3px]">ENG<br />IN</div>
      <svg width="86" height="22" viewBox="0 0 86 22" className="-mt-1 ml-[16px] shrink-0" fill="none" stroke="#fff" strokeWidth="1.500">
        <path d="M1.500 9c5-6 13-6 18 0M4 12c4-4.500 9-4.500 13 0M7 15c2-2.500 5-2.500 7 0" /><circle cx="10.500" cy="18" r="1.500" fill="#fff" stroke="none" />
        <path d="M31 8.500h3l5-4.500v15l-5-4.500h-3zM42 8.500c1.500 2 1.500 4 0 6M45 6c3 3.500 3 7.500 0 11M48 4c4 4.500 4 10.500 0 15" />
        <rect x="62" y="6" width="17" height="13" rx="2.500" /><path d="M64 8h13v9H64z" fill="#fff" stroke="none" /><path d="M81 10v5" strokeWidth="2.500" /><path d="M64 1l-4 8h4l-2 6 6-8h-4z" fill="#fff" stroke="#20211c" />
      </svg>
      <div className="-mt-px ml-auto pr-[19px] text-right text-[14.5px] leading-5 whitespace-nowrap">3:02 PM<br />8/24/2023</div>
    </footer>
  );
}

export default function App() {
  return (
    <div className="flex h-[1080px] w-[1920px] flex-col overflow-hidden bg-[#f3f2f1] font-['Open_Sans','Noto_Sans',sans-serif]">
      <TitleBar />
      <Tabs />
      <Ribbon />
      <div className="flex h-[790px]">
        <Rail />
        <div className="flex w-[1417px] shrink-0 flex-col">
          <div className="flex"><Report /><Filters /></div>
          <PageTabs />
        </div>
        <Visualizations />
        <DataPane />
      </div>
      <StatusBar />
      <Taskbar />
    </div>
  );
}
